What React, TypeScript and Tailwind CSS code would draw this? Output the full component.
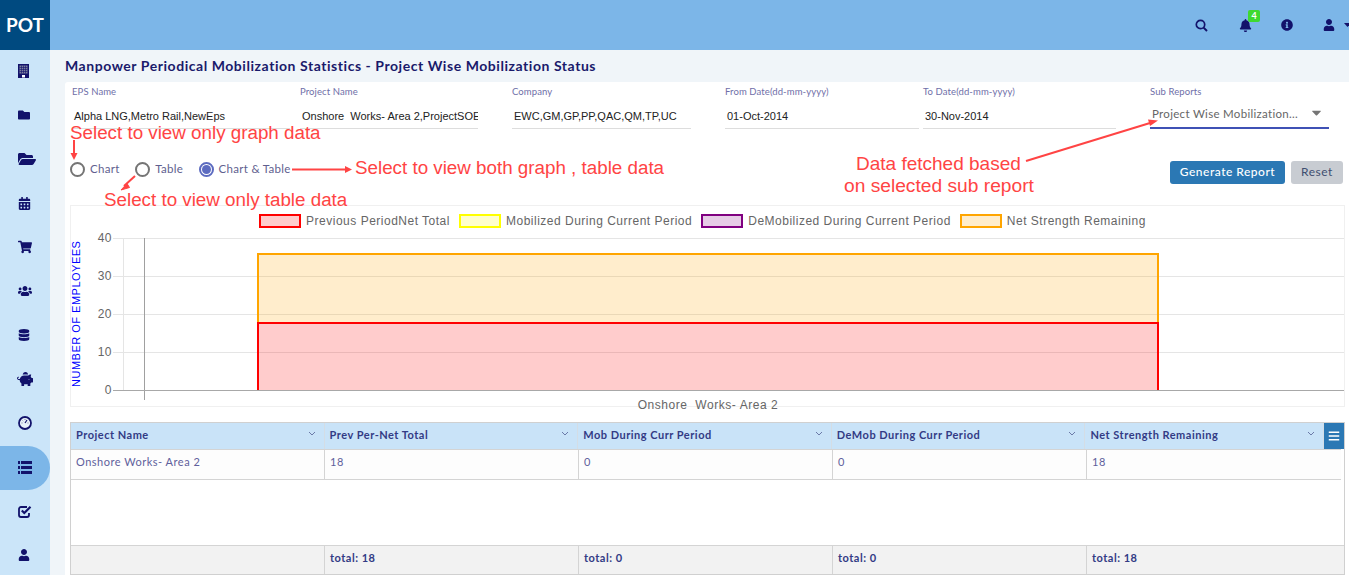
import type { ReactNode } from "react";
import {
  FaBars,
  FaBell,
  FaCalendarAlt,
  FaCaretDown,
  FaDatabase,
  FaFolder,
  FaFolderOpen,
  FaInfoCircle,
  FaPiggyBank,
  FaShoppingCart,
  FaUser,
  FaUsers,
} from "react-icons/fa";

function BuildingIcon() {
  return (
    <svg width="11" height="14" viewBox="0 0 11 14">
      <rect width="11" height="14" fill="#12126b" />
      <rect x="1.500" y="1.500" width="8" height="8" fill="#7d7f9e" />
      <path d="M3.500 1.500v8M5.500 1.500v8M7.500 1.500v8M1.500 3.500h8M1.500 5.500h8M1.500 7.500h8" stroke="#12126b" strokeWidth="0.6" />
      <rect x="4" y="11" width="3" height="2.500" fill="#ffffff" />
    </svg>
  );
}

function GaugeIcon() {
  return (
    <svg width="14" height="14" viewBox="0 0 14 14">
      <circle cx="7" cy="7" r="6" fill="#e8f1f9" stroke="#12126b" strokeWidth="1.800" />
      <path d="M7 7l2-3" stroke="#12126b" strokeWidth="1.200" />
      <path d="M3.500 7h1M9.500 7h1M7 3v1M4.600 4.600l.6.6" stroke="#7d7f9e" strokeWidth="1" />
    </svg>
  );
}

function ListIcon() {
  return (
    <svg width="14" height="13" viewBox="0 0 14 13" fill="#12126b">
      <rect x="0" y="0" width="2" height="3" />
      <rect x="3" y="0" width="11" height="3" />
      <rect x="0" y="5" width="2" height="3" />
      <rect x="3" y="5" width="11" height="3" />
      <rect x="0" y="10" width="2" height="3" />
      <rect x="3" y="10" width="11" height="3" />
    </svg>
  );
}

function CheckIcon() {
  return (
    <svg width="14" height="13" viewBox="0 0 14 13" fill="none" stroke="#12126b">
      <path d="M9 2H3a2 2 0 0 0-2 2v6a2 2 0 0 0 2 2h6a2 2 0 0 0 2-2V8" strokeWidth="1.800" />
      <path d="M3.800 5.500L6.300 8 12.500 1.800" strokeWidth="2.200" />
    </svg>
  );
}

const navIcons: ReactNode[] = [
  <BuildingIcon />,
  <FaFolder size={12} />,
  <FaFolderOpen size={18} />,
  <FaCalendarAlt size={13} />,
  <FaShoppingCart size={14} />,
  <FaUsers size={14} />,
  <FaDatabase size={12} />,
  <FaPiggyBank size={16} className="ml-[-1px]" />,
  <GaugeIcon />,
  <ListIcon />,
  <CheckIcon />,
  <FaUser size={12} />,
];

const fields = [
  { label: "EPS Name", value: "Alpha LNG,Metro Rail,NewEps", width: "w-[218px]", gap: "mr-[10px]" },
  { label: "Project Name", value: "Onshore  Works- Area 2,ProjectSOE", width: "w-[178px]", gap: "mr-[34px]" },
  { label: "Company", value: "EWC,GM,GP,PP,QAC,QM,TP,UC", width: "w-[179px]", gap: "mr-[34px]" },
  { label: "From Date(dd-mm-yyyy)", value: "01-Oct-2014", width: "w-[194px]", gap: "mr-[4px]" },
  { label: "To Date(dd-mm-yyyy)", value: "30-Nov-2014", width: "w-[193px]", gap: "mr-[34px]" },
];

const legend = [
  { label: "Previous PeriodNet Total", box: "border-[#ff0000] bg-[#ffcccc]" },
  { label: "Mobilized During Current Period", box: "border-[#ffff00] bg-[#ffffcc]" },
  { label: "DeMobilized During Current Period", box: "border-[#800080] bg-[#e6cce6]" },
  { label: "Net Strength Remaining", box: "border-[#ffa500] bg-[#ffedcc]" },
];

const columns = [
  { name: "Project Name", value: "Onshore Works- Area 2", total: "", width: "w-[254px]" },
  { name: "Prev Per-Net Total", value: "18", total: "total: 18", width: "w-[254px]" },
  { name: "Mob During Curr Period", value: "0", total: "total: 0", width: "w-[254px]" },
  { name: "DeMob During Curr Period", value: "0", total: "total: 0", width: "w-[254px]" },
  { name: "Net Strength Remaining", value: "18", total: "total: 18", width: "w-[239px]" },
];

function Radio({ label, checked }: { label: string; checked?: boolean }) {
  return (
    <div className="flex items-center gap-[5px]">
      <span
        className={`flex h-[15px] w-[15px] items-center justify-center rounded-full border-2 ${
          checked ? "border-[#5c6bc0]" : "border-[#757575]"
        }`}
      >
        {checked && <span className="h-[9px] w-[9px] rounded-full bg-[#5c6bc0]" />}
      </span>
      <span className="text-[11.500px] tracking-[0.3px] text-[#5f5f8f]">{label}</span>
    </div>
  );
}

function Chart() {
  const grid = [
    { y: 2, label: "40" },
    { y: 40, label: "30" },
    { y: 78, label: "20" },
    { y: 116, label: "10" },
    { y: 154, label: "0" },
  ];
  return (
    <div className="h-[202px] w-[1275px] border border-[#f0f0f0] font-['Liberation_Sans',sans-serif]">
      <div className="flex h-[30px] items-center justify-center gap-[9px] pr-[10px]">
        {legend.map((item) => (
          <div key={item.label} className="flex items-center gap-[5px]">
            <span className={`h-[14px] w-[42px] border-2 ${item.box}`} />
            <span className="text-[12px] tracking-[0.5px] text-[#666666]">{item.label}</span>
          </div>
        ))}
      </div>
      <svg width="1273" height="170" className="block overflow-visible" style={{ fontFamily: "Liberation Sans" }}>
        {grid.map((g) => (
          <g key={g.y}>
            <line x1="42" x2="1273" y1={g.y + 0.5} y2={g.y + 0.5} stroke="#e5e5e5" />
            <text x="41" y={g.y + 4} textAnchor="end" fontSize="12" letterSpacing="0.5" fill="#666666">
              {g.label}
            </text>
          </g>
        ))}
        <line x1="52.500" x2="52.500" y1="2" y2="154" stroke="#e5e5e5" />
        <line x1="73.500" x2="73.500" y1="2" y2="164" stroke="#a0a0a0" />
        <rect x="187" y="18" width="900" height="69" fill="#ffa500" fillOpacity="0.2" />
        <rect x="187" y="87" width="900" height="67" fill="#ff0000" fillOpacity="0.2" />
        <path d="M187 87V18H1087V87" fill="none" stroke="#ffa500" strokeWidth="2" />
        <path d="M187 154V87H1087V154" fill="none" stroke="#ff0000" strokeWidth="2" />
        <line x1="42" x2="1273" y1="154.500" y2="154.500" stroke="#a8a8a8" />
        <text transform="translate(9 151) rotate(-90)" fontSize="11" letterSpacing="0.5" fill="#0000ff">
          NUMBER OF EMPLOYEES
        </text>
        <text x="637" y="173" textAnchor="middle" fontSize="12" letterSpacing="0.55" fill="#666666" xmlSpace="preserve">
          Onshore  Works- Area 2
        </text>
      </svg>
    </div>
  );
}

function ReportTable() {
  return (
    <div className="h-[153px] w-[1275px] border border-[#d0d0d0] bg-white text-[11px] tracking-[0.5px]">
      <div className="flex h-[26px] bg-[#c9e3f8] font-bold text-[#333b85]">
        {columns.map((col) => (
          <div
            key={col.name}
            className={`flex items-center justify-between border-r border-[#d4dde5] pb-[2px] pl-[5px] pr-[8px] ${col.width}`}
          >
            <span>{col.name}</span>
            <svg width="8" height="5" viewBox="0 0 8 5" className="mb-[3px]">
              <path d="M1 1l3 3 3-3" fill="none" stroke="#6b7aa8" strokeWidth="1" />
            </svg>
          </div>
        ))}
        <div className="flex w-[20px] items-center justify-center bg-[#2b78b4] text-white">
          <FaBars size={12} />
        </div>
      </div>
      <div className="flex h-[31px] w-[1270px] border-b border-t border-[#d4d4d4] bg-[#fdfdfd] text-[#5f5f9c]">
        {columns.map((col) => (
          <div
            key={col.name}
            className={`flex items-center border-r border-[#d4d4d4] pb-[4px] pl-[5px] last:border-r-0 ${col.width}`}
          >
            {col.value}
          </div>
        ))}
      </div>
      <div className="h-[65px]" />
      <div className="flex h-[29px] border-t border-[#d4d4d4] bg-[#f2f2f2] font-bold text-[#333b85]">
        {columns.map((col) => (
          <div
            key={col.name}
            className={`flex items-center border-r border-[#d4d4d4] pb-[3px] pl-[5px] last:border-r-0 ${col.width}`}
          >
            {col.total}
          </div>
        ))}
      </div>
    </div>
  );
}

function Annotations() {
  const red = "#ff4444";
  return (
    <div className="pointer-events-none absolute left-0 top-0 font-['Liberation_Sans',sans-serif] text-[18.800px] leading-[22px] text-[#ff4444]">
      <span className="absolute left-[70px] top-[122px] whitespace-nowrap">Select to view only graph data</span>
      <span className="absolute left-[355px] top-[157px] whitespace-nowrap">Select to view both graph , table data</span>
      <span className="absolute left-[104px] top-[189px] whitespace-nowrap">Select to view only table data</span>
      <span className="absolute left-[856px] top-[153px] whitespace-nowrap text-[19px]">Data fetched based</span>
      <span className="absolute left-[844px] top-[175px] whitespace-nowrap text-[19.200px]">on selected sub report</span>
      <svg width="1349" height="575" className="absolute left-0 top-0">
        <g stroke={red} strokeWidth="2" fill={red}>
          <line x1="74" y1="140" x2="74" y2="155" />
          <path d="M70.500 153 L77.500 153 L74 160 Z" strokeWidth="0" />
          <line x1="135" y1="176" x2="124" y2="186" />
          <path d="M127 183.500 L121 190 L129.500 187.500 Z" strokeWidth="1" />
          <line x1="292" y1="169.500" x2="346" y2="169.500" />
          <path d="M345 166 L352 169.500 L345 173 Z" strokeWidth="0" />
          <line x1="1026" y1="161" x2="1150" y2="123" />
          <path d="M1148 119.500 L1158 120.500 L1150 126 Z" strokeWidth="0" />
        </g>
      </svg>
    </div>
  );
}

export default function App() {
  return (
    <div className="relative h-[575px] w-[1349px] overflow-hidden bg-[#f0f5f9] font-['Lato',sans-serif]">
      {/* Top bar */}
      <header className="flex h-[50px] overflow-hidden bg-[#7cb6e8]">
        <div className="flex w-[50px] items-center justify-center bg-[#004a80] text-[19px] font-bold text-white">
          POT
        </div>
        <div className="ml-auto flex items-center text-[#12126b]">
          <svg width="13" height="13" viewBox="0 0 13 13" fill="none" stroke="#12126b" className="mr-[31px]">
            <circle cx="5.500" cy="5.500" r="4.200" strokeWidth="1.700" />
            <path d="M8.600 8.600L12 12" strokeWidth="2" />
          </svg>
          <div className="relative mr-[29px]">
            <FaBell size={13} />
            <span className="absolute left-[9px] top-[-9px] flex h-[12px] w-[12px] items-center justify-center rounded-[2px] bg-[#3fd92f] text-[9px] font-bold text-white">
              4
            </span>
          </div>
          <FaInfoCircle size={12} className="mr-[30px]" />
          <FaUser size={12} />
          <svg width="5" height="4" viewBox="0 0 5 4" className="ml-[9px]">
            <path d="M0 0H7L3.500 4Z" fill="#12126b" />
          </svg>
        </div>
      </header>

      <div className="flex">
        {/* Side menu */}
        <nav className="h-[525px] w-[50px] bg-[#cbe5f9] text-[#12126b]">
          {navIcons.map((icon, i) => (
            <div
              key={i}
              className={`flex h-[44px] items-center pb-[2px] pl-[18px] ${
                i === 9 ? "rounded-r-[24px] bg-[#7cb6e8]" : ""
              }`}
            >
              {icon}
            </div>
          ))}
        </nav>

        <main className="ml-[15px] w-[1284px]">
          <h1 className="flex h-[32px] items-center pb-[2px] text-[14px] font-bold tracking-[0.55px] text-[#1a1a6b]">
            Manpower Periodical Mobilization Statistics - Project Wise Mobilization Status
          </h1>

          <section className="h-[493px] rounded-tl-[3px] bg-white pl-[5px]">
            {/* Filters */}
            <div className="flex h-[48px] pl-[2px]">
              {fields.map((f) => (
                <div key={f.label} className={`h-[47px] border-b border-[#dddddd] ${f.width} ${f.gap}`}>
                  <div className="pt-[4px] text-[9.500px] leading-[12px] tracking-[0.1px] text-[#6f6fa8]">{f.label}</div>
                  <div className="overflow-hidden whitespace-pre pl-[2px] pt-[11px] font-['Liberation_Sans',sans-serif] text-[11px] leading-[14px] text-[#222222]">
                    {f.value}
                  </div>
                </div>
              ))}
              <div className="h-[47px] w-[179px] border-b-2 border-[#3f51b5]">
                <div className="pt-[4px] text-[9.500px] leading-[12px] tracking-[0.1px] text-[#6f6fa8]">Sub Reports</div>
                <div className="flex items-center justify-between pl-[2px] pr-[5px] pt-[7px] text-[11.500px] leading-[14px] tracking-[0.3px] text-[#666666]">
                  <span>Project Wise Mobilization...</span>
                  <FaCaretDown size={15} className="mb-[3px] text-[#757575]" />
                </div>
              </div>
            </div>

            {/* View switch and actions */}
            <div className="mt-[30px] flex h-[24px] w-[1273px] items-center justify-between">
              <div className="flex items-center gap-[15.500px] pb-[6px]">
                <Radio label="Chart" />
                <Radio label="Table" />
                <Radio label="Chart & Table" checked />
              </div>
              <div className="flex gap-[6px]">
                <button className="h-[23px] w-[115px] rounded-[3px] bg-[#2b78b4] text-[12px] font-medium tracking-[0.5px] text-white">
                  Generate Report
                </button>
                <button className="h-[23px] w-[52px] rounded-[3px] bg-[#c8ccd2] text-[12px] tracking-[0.5px] text-[#3f4f70]">
                  Reset
                </button>
              </div>
            </div>

            <div className="mt-[21px]">
              <Chart />
            </div>
            <div className="mt-[15px]">
              <ReportTable />
            </div>
          </section>
        </main>
      </div>

      <Annotations />
    </div>
  );
}
